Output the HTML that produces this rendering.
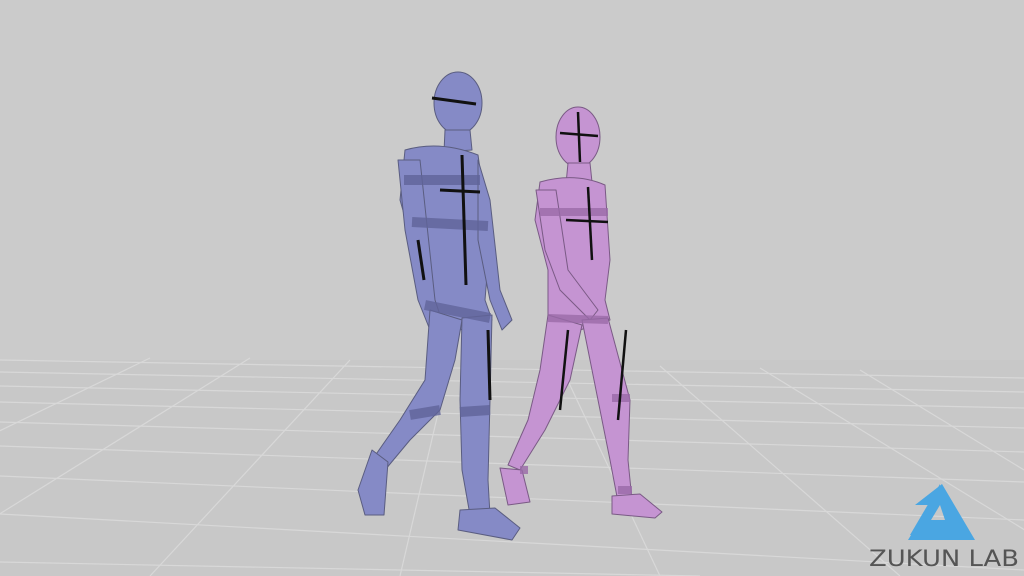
<!DOCTYPE html>
<html><head><style>
html,body{margin:0;padding:0;width:1024px;height:576px;overflow:hidden;background:#cbcbcb}
svg{display:block}
.t{font-family:"DejaVu Sans","Liberation Sans",sans-serif}
</style></head><body>
<svg width="1024" height="576" viewBox="0 0 1024 576" xmlns="http://www.w3.org/2000/svg">
<rect width="1024" height="576" fill="#cbcbcb"/>
<rect y="360" width="1024" height="216" fill="#c8c8c8"/>
<g stroke="#d8d8d8" stroke-width="1.2" fill="none">
<path d="M0 360 L1024 378"/><path d="M0 372 L1024 392"/><path d="M0 386 L1024 408"/>
<path d="M0 402 L1024 428"/><path d="M0 422 L1024 452"/><path d="M0 446 L1024 482"/>
<path d="M0 476 L1024 520"/><path d="M0 514 L1024 570"/><path d="M0 562 L700 576"/>
<path d="M250 358 L-100 576"/><path d="M350 360 L150 576"/><path d="M450 362 L400 576"/>
<path d="M560 364 L660 576"/><path d="M660 366 L900 576"/><path d="M760 368 L1100 576"/>
<path d="M860 370 L1024 470"/><path d="M150 358 L-300 576"/>
</g>
<!-- man -->
<g fill="#858ac6" stroke="#5a5d80" stroke-width="1" stroke-linejoin="round">
<ellipse cx="458" cy="103" rx="24" ry="31"/>
<path d="M445 130 L470 130 L472 150 L444 152Z"/>
<path d="M405 150 Q440 140 478 155 L490 240 L485 300 L492 320 L460 330 L430 318 L420 270 L400 200Z"/>
<path d="M398 160 L420 160 L435 300 L445 330 L432 335 L418 300 L405 230Z"/>
<path d="M478 160 L490 200 L500 290 L512 320 L502 330 L490 300 L478 240Z"/>
<path d="M430 310 L462 320 L455 360 L440 410 L410 440 L385 470 L372 460 L400 420 L425 380Z"/>
<path d="M462 318 L492 315 L490 400 L488 480 L490 515 L470 515 L462 470 L460 400Z"/>
<path d="M372 450 L388 462 L384 515 L365 515 L358 490 Z"/>
<path d="M460 510 L495 508 L520 528 L512 540 L458 530Z"/>
</g>
<g stroke="#60649a" stroke-width="10" fill="none" opacity="0.8">
<path d="M404 180 L480 180"/><path d="M412 222 L488 226"/><path d="M425 305 L490 318"/><path d="M410 415 L440 410"/><path d="M460 412 L490 410"/>
</g>
<g stroke="#111" stroke-width="3" fill="none">
<path d="M462 155 L466 285"/><path d="M440 190 L480 192"/><path d="M432 98 L476 104"/><path d="M488 330 L490 400"/>
<path d="M418 240 L424 280"/>
</g>
<!-- woman -->
<g fill="#c594d2" stroke="#7a5a85" stroke-width="1" stroke-linejoin="round">
<ellipse cx="578" cy="137" rx="22" ry="30"/>
<path d="M568 163 L590 163 L592 182 L566 184Z"/>
<path d="M540 182 Q575 172 605 185 L610 260 L605 300 L610 320 L580 330 L548 320 L548 270 L535 220Z"/>
<path d="M536 190 L556 190 L568 270 L598 310 L590 320 L560 290 L545 250Z"/>
<path d="M548 315 L582 325 L570 380 L545 430 L520 470 L508 465 L528 420 L540 370Z"/>
<path d="M582 320 L608 318 L630 400 L628 460 L632 500 L618 502 L610 460 L598 400Z"/>
<path d="M500 468 L522 470 L530 502 L508 505Z"/>
<path d="M612 496 L640 494 L662 512 L655 518 L612 514Z"/>
</g>
<g stroke="#9a6aa8" stroke-width="8" fill="none" opacity="0.8">
<path d="M540 212 L608 212"/><path d="M548 318 L608 320"/><path d="M612 398 L630 398"/><path d="M520 470 L528 470"/><path d="M618 490 L632 490"/>
</g>
<g stroke="#111" stroke-width="2.5" fill="none">
<path d="M588 187 L592 260"/><path d="M566 220 L608 222"/><path d="M560 133 L598 136"/><path d="M578 112 L580 162"/>
<path d="M568 330 L560 410"/><path d="M626 330 L618 420"/>
</g>
<!-- logo -->
<path d="M942 484 L975 540 L908 540 L920 520 L945 520 L940 505 L915 505 Z" fill="#4aa6e2"/>
<path d="M940 484 L910 535 L922 535 L940 505 Z" fill="#4aa6e2"/>
<text x="944" y="566" text-anchor="middle" class="t" font-size="22" fill="#555" textLength="150" lengthAdjust="spacingAndGlyphs">ZUKUN LAB</text>
</svg>
</body></html>
